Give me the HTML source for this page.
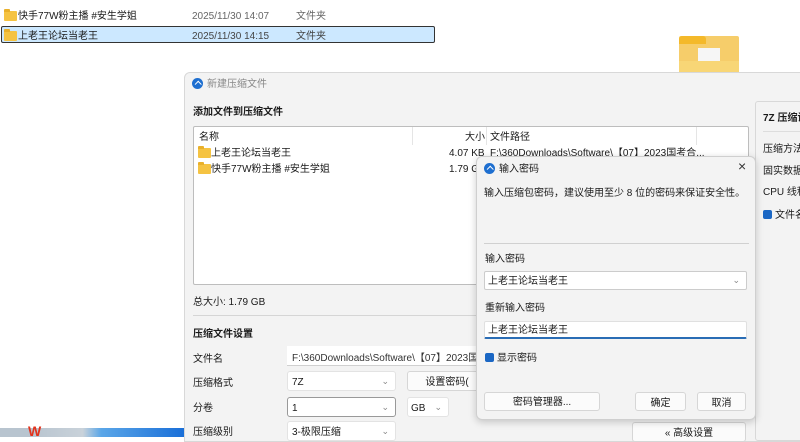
<!DOCTYPE html>
<html><head><meta charset="utf-8"><style>
*{box-sizing:border-box;margin:0;padding:0}
body{width:800px;height:437px;overflow:hidden;background:#fff;position:relative;font-family:"Liberation Sans","Noto Sans CJK SC",sans-serif;font-size:10px;line-height:12px;color:#1a1a1a}
.a{position:absolute;white-space:nowrap;margin-top:2px}
.fold{position:absolute;width:13px;height:10px;background:#f5c342;border-radius:1px}
.fold:before{content:"";position:absolute;left:0;top:-2px;width:6px;height:3px;background:#e9b02b;border-radius:1px 1px 0 0}
.box{position:absolute;background:#fff;border:1px solid #d0d0d0;border-radius:3px}
.btn{position:absolute;background:#fbfbfb;border:1px solid #d6d6d6;border-radius:3px;text-align:center;padding-top:5px!important}
.chev{position:absolute;right:6px;top:3px;color:#888;font-size:9px}
.icon{position:absolute;width:11px;height:11px;border-radius:50%;background:#1e6fd0}
.icon:after{content:"";position:absolute;left:3px;top:3px;width:4px;height:4px;border:1.5px solid #fff;border-left:none;border-bottom:none;transform:rotate(-45deg) translate(0,1px)}
</style></head><body>
<div class="fold" style="left:4px;top:11px"></div>
<div class="a" style="left:18px;top:9px">快手77W粉主播 #安生学姐</div>
<div class="a" style="left:192px;top:9px;color:#666">2025/11/30 14:07</div>
<div class="a" style="left:296px;top:9px;color:#666">文件夹</div>
<div style="position:absolute;left:1px;top:26px;width:434px;height:17px;background:#cce8ff;border:1px solid #333;border-radius:2px"></div>
<div class="fold" style="left:4px;top:31px"></div>
<div class="a" style="left:18px;top:29px">上老王论坛当老王</div>
<div class="a" style="left:192px;top:29px;color:#444">2025/11/30 14:15</div>
<div class="a" style="left:296px;top:29px;color:#444">文件夹</div>
<div style="position:absolute;left:0;top:428px;width:184px;height:9px;background:linear-gradient(90deg,#b8c4cf 0,#b8c4cf 30px,#c9d2da 45%,#5aa6e8 55%,#1a6fd8 100%)"></div>
<div class="a" style="left:28px;top:423px;color:#e2331d;font-weight:bold;font-size:14px">W</div>
<div style="position:absolute;left:679px;top:36px;width:60px;height:36px;background:#f6cd6a;border-radius:2px"></div>
<div style="position:absolute;left:679px;top:36px;width:27px;height:8px;background:#f4b92a;border-radius:3px 3px 0 0"></div>
<div style="position:absolute;left:698px;top:48px;width:22px;height:16px;background:#f6f6f6"></div>
<div style="position:absolute;left:679px;top:61px;width:60px;height:11px;background:#f8d676"></div>
<div style="position:absolute;left:184px;top:72px;width:620px;height:370px;background:#f3f3f3;border:1px solid #d8d8d8;border-radius:6px 0 0 0"></div>
<div class="icon" style="left:192px;top:78px"></div>
<div class="a" style="left:207px;top:77px;color:#888">新建压缩文件</div>
<div class="a" style="left:193px;top:105px;font-weight:bold">添加文件到压缩文件</div>
<div class="box" style="left:193px;top:126px;width:556px;height:159px;border-radius:2px;border-color:#bdbdbd"></div>
<div style="position:absolute;left:412px;top:127px;width:1px;height:18px;background:#e5e5e5"></div>
<div style="position:absolute;left:486px;top:127px;width:1px;height:18px;background:#e5e5e5"></div>
<div style="position:absolute;left:696px;top:127px;width:1px;height:18px;background:#e5e5e5"></div>
<div class="a" style="left:199px;top:130px">名称</div>
<div class="a" style="left:465px;top:130px">大小</div>
<div class="a" style="left:490px;top:130px">文件路径</div>
<div class="fold" style="left:198px;top:148px"></div>
<div class="a" style="left:211px;top:146px">上老王论坛当老王</div>
<div class="a" style="left:449px;top:146px">4.07 KB</div>
<div class="a" style="left:490px;top:146px">F:\360Downloads\Software\【07】2023国考合...</div>
<div class="fold" style="left:198px;top:164px"></div>
<div class="a" style="left:211px;top:162px">快手77W粉主播 #安生学姐</div>
<div class="a" style="left:449px;top:162px">1.79 G</div>
<div class="a" style="left:193px;top:295px">总大小: 1.79 GB</div>
<div style="position:absolute;left:193px;top:315px;width:283px;height:1px;background:#d5d5d5"></div>
<div class="a" style="left:193px;top:327px;font-weight:bold">压缩文件设置</div>
<div class="a" style="left:193px;top:352px">文件名</div>
<div class="box" style="left:287px;top:346px;width:200px;height:20px;border-width:0 0 1px 0;border-radius:0"></div>
<div class="a" style="left:292px;top:351px;color:#333">F:\360Downloads\Software\【07】2023国考</div>
<div class="a" style="left:193px;top:376px">压缩格式</div>
<div class="box" style="left:287px;top:371px;width:109px;height:20px;border-color:#e3e3e3"><span class="a" style="left:4px;top:3px">7Z</span><span class="chev">⌄</span></div>
<div class="btn" style="left:407px;top:371px;width:80px;height:20px">设置密码(</div>
<div class="a" style="left:193px;top:401px">分卷</div>
<div class="box" style="left:287px;top:397px;width:109px;height:20px;border-color:#999"><span class="a" style="left:4px;top:3px">1</span><span class="chev">⌄</span></div>
<div class="box" style="left:407px;top:397px;width:42px;height:20px;border-color:#e3e3e3"><span class="a" style="left:3px;top:3px">GB</span><span class="chev">⌄</span></div>
<div class="a" style="left:193px;top:425px">压缩级别</div>
<div class="box" style="left:287px;top:421px;width:109px;height:20px;border-color:#e3e3e3"><span class="a" style="left:4px;top:3px">3-极限压缩</span><span class="chev">⌄</span></div>
<div class="btn" style="left:632px;top:422px;width:114px;height:20px">« 高级设置</div>
<div style="position:absolute;left:755px;top:101px;width:50px;height:340px;border:1px solid #d8d8d8;border-radius:3px;background:#f3f3f3"></div>
<div class="a" style="left:763px;top:111px;font-weight:bold">7Z 压缩设</div>
<div style="position:absolute;left:763px;top:131px;width:40px;height:1px;background:#ddd"></div>
<div class="a" style="left:763px;top:142px">压缩方法</div>
<div class="a" style="left:763px;top:164px">固实数据大</div>
<div class="a" style="left:763px;top:185px">CPU 线程</div>
<div style="position:absolute;left:763px;top:210px;width:9px;height:9px;background:#1b67c4;border-radius:2px"></div>
<div class="a" style="left:775px;top:208px">文件名</div>
<div style="position:absolute;left:476px;top:156px;width:280px;height:264px;background:#f3f3f3;border:1px solid #cfcfcf;border-radius:6px;box-shadow:0 2px 8px rgba(0,0,0,.2)"></div>
<div class="icon" style="left:484px;top:163px"></div>
<div class="a" style="left:499px;top:162px">输入密码</div>
<div class="a" style="left:738px;top:158px;font-size:14px;color:#333">×</div>
<div class="a" style="left:484px;top:186px">输入压缩包密码，建议使用至少 8 位的密码来保证安全性。</div>
<div style="position:absolute;left:484px;top:243px;width:265px;height:1px;background:#d0d0d0"></div>
<div class="a" style="left:485px;top:252px">输入密码</div>
<div class="box" style="left:484px;top:271px;width:263px;height:19px;border-color:#ccc;border-radius:2px"><span class="a" style="left:3px;top:2px">上老王论坛当老王</span><span class="chev" style="top:2px">⌄</span></div>
<div class="a" style="left:485px;top:301px">重新输入密码</div>
<div class="box" style="left:484px;top:321px;width:263px;height:18px;border-color:#e0e0e0;border-bottom:2px solid #2a6db5;border-radius:2px"><span class="a" style="left:3px;top:1px">上老王论坛当老王</span></div>
<div style="position:absolute;left:485px;top:353px;width:9px;height:9px;background:#1b67c4;border-radius:2px"></div>
<div class="a" style="left:497px;top:351px">显示密码</div>
<div class="btn" style="left:484px;top:392px;width:116px;height:19px;padding-top:4px!important">密码管理器...</div>
<div class="btn" style="left:635px;top:392px;width:51px;height:19px">确定</div>
<div class="btn" style="left:697px;top:392px;width:49px;height:19px">取消</div>
</body></html>
